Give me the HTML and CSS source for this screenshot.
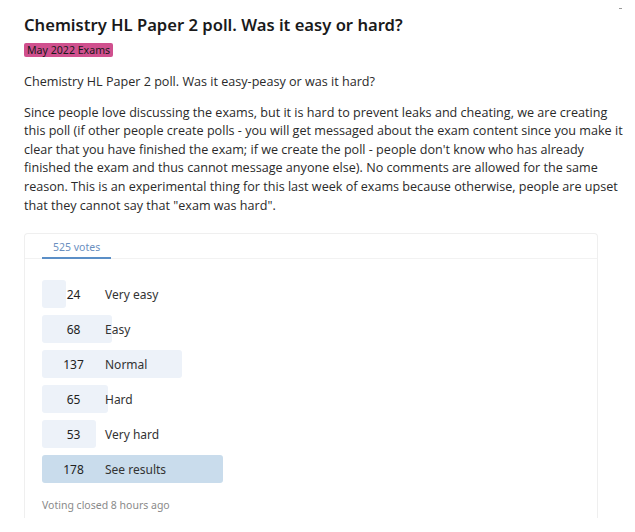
FILE: index.html
```html
<!DOCTYPE html>
<html lang="en">
<head>
    <meta charset="UTF-8">
    <title>Chemistry HL Paper 2 poll</title>
    <link rel="stylesheet" href="styles.css">
</head>
<body>
    <span class="corner-mark"></span>
    <div class="post">
        <h1 class="post-title">Chemistry HL Paper 2 poll. Was it easy or hard?</h1>
        <span class="flair">May 2022 Exams</span>

        <div class="post-body">
            <p>Chemistry HL Paper 2 poll. Was it easy-peasy or was it hard?</p>
            <p>Since people love discussing the exams, but it is hard to prevent leaks and cheating, we are creating this poll (if other people create polls - you will get messaged about the exam content since you make it clear that you have finished the exam; if we create the poll - people don't know who has already finished the exam and thus cannot message anyone else). No comments are allowed for the same reason. This is an experimental thing for this last week of exams because otherwise, people are upset that they cannot say that "exam was hard".</p>
        </div>

        <div class="poll">
            <div class="poll-tabs">
                <span class="poll-tab active">525 votes</span>
            </div>
            <div class="poll-options">
                <div class="option">
                    <div class="option-bar" style="width: 24px"></div>
                    <span class="option-count">24</span>
                    <span class="option-label">Very easy</span>
                </div>
                <div class="option">
                    <div class="option-bar" style="width: 70px"></div>
                    <span class="option-count">68</span>
                    <span class="option-label">Easy</span>
                </div>
                <div class="option">
                    <div class="option-bar" style="width: 140px"></div>
                    <span class="option-count">137</span>
                    <span class="option-label">Normal</span>
                </div>
                <div class="option">
                    <div class="option-bar" style="width: 66px"></div>
                    <span class="option-count">65</span>
                    <span class="option-label">Hard</span>
                </div>
                <div class="option">
                    <div class="option-bar" style="width: 54px"></div>
                    <span class="option-count">53</span>
                    <span class="option-label">Very hard</span>
                </div>
                <div class="option results">
                    <div class="option-bar" style="width: 181px"></div>
                    <span class="option-count">178</span>
                    <span class="option-label">See results</span>
                </div>
            </div>
            <div class="poll-footer">Voting closed 8 hours ago</div>
        </div>
    </div>
</body>
</html>
```

FILE: styles.css
```css
body {
    margin: 0;
    padding: 0;
    background: #ffffff;
    color: #1c1c1c;
    font-family: 'Noto Sans', sans-serif;
}
.corner-mark {
    position: absolute;
    top: 8px;
    left: 619px;
    width: 3px;
    height: 1px;
    background: #9a9a9a;
}
.post {
    padding: 13px 12px 0 24px;
}
.post-title {
    margin: 0;
    font-size: 16.6px;
    font-weight: 600;
    line-height: 24px;
    color: #1a1a1b;
}
.flair {
    display: inline-block;
    margin-top: 6px;
    padding: 0 3px;
    font-size: 10.6px;
    line-height: 14px;
    background: #d0508e;
    color: #1a1a1b;
    border-radius: 2px;
}
.post-body {
    margin-top: 14px;
    font-family: 'Open Sans', sans-serif;
    font-size: 12.6px;
    line-height: 18.6px;
    color: #2a2a2a;
}
.post-body p {
    margin: 0 0 12px 0;
}
.poll {
    margin-top: 18px;
    width: 572px;
    border: 1px solid #efefef;
    border-bottom: none;
    border-radius: 4px 4px 0 0;
    height: 284px;
}
.poll-tabs {
    padding-left: 17px;
    border-bottom: 1px solid #f2f2f2;
}
.poll-tab {
    display: inline-block;
    padding: 4px 11px 3px 11px;
    font-size: 10.5px;
    line-height: 13px;
    color: #6b8fbf;
    border-bottom: 2px solid #5b8fc7;
    margin-bottom: -1px;
}
.poll-options {
    padding: 21px 17px 0 17px;
    display: flex;
    flex-direction: column;
    gap: 7px;
}
.option {
    position: relative;
    height: 28px;
    display: flex;
    align-items: center;
    font-size: 12px;
    color: #333333;
}
.option-bar {
    position: absolute;
    left: 0;
    top: 0;
    height: 28px;
    background: #edf2f9;
    border-radius: 3px;
}
.results .option-bar {
    background: #c9dcec;
}
.option-count {
    position: relative;
    width: 63px;
    text-align: center;
    color: #222222;
}
.option-label {
    position: relative;
}
.poll-footer {
    margin-top: 15px;
    padding-left: 17px;
    font-size: 10.5px;
    color: #8a8a8a;
}
```
